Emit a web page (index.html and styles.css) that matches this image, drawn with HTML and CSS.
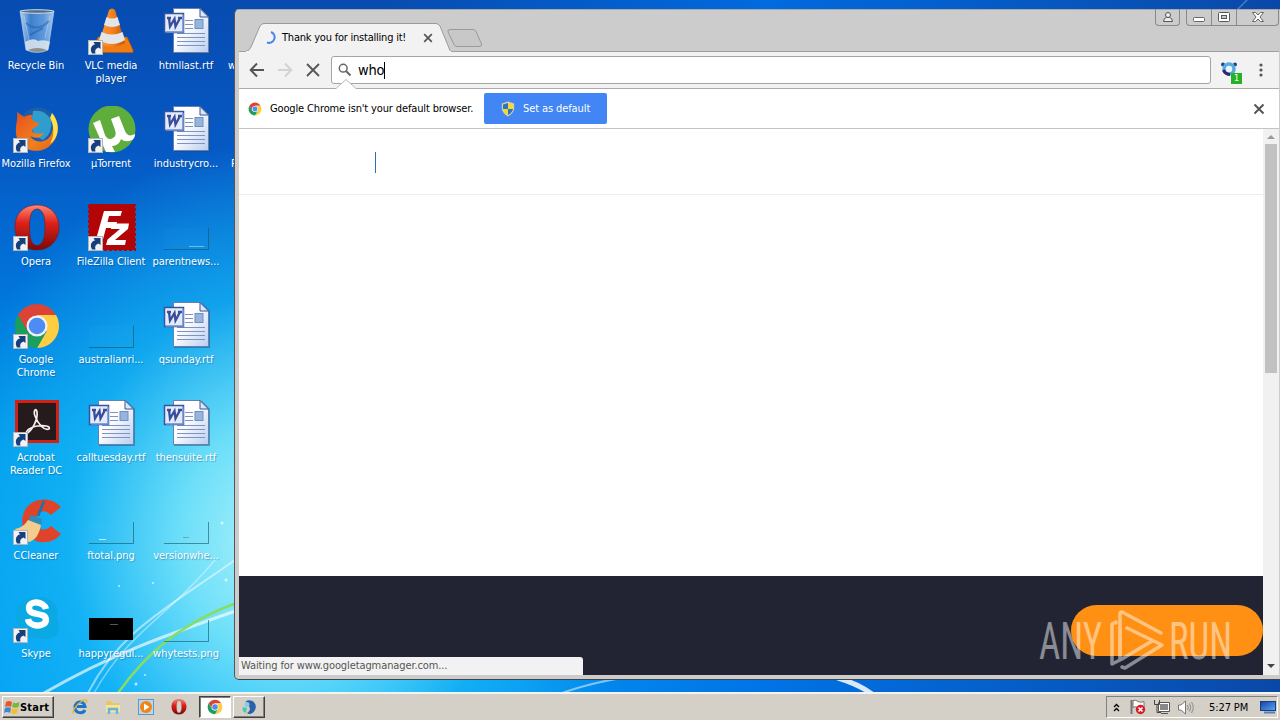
FILE: index.html
```html
<!DOCTYPE html>
<html lang="en">
<head>
    <meta charset="UTF-8">
    <title>Desktop</title>
    <link rel="stylesheet" href="styles.css">
</head>
<body>
    <!-- shared icons -->
    <svg class="defs" width="0" height="0">
        <defs>
            <linearGradient id="gPage" x1="0" y1="0" x2="1" y2="1"><stop offset="0.4" stop-color="#fff"/><stop offset="1" stop-color="#b9cdf2"/></linearGradient>
            <linearGradient id="gGlass" x1="0" y1="0" x2="1" y2="0"><stop offset="0" stop-color="#b9d4f0"/><stop offset="0.3" stop-color="#3e7fce"/><stop offset="0.7" stop-color="#5d98db"/><stop offset="1" stop-color="#a5c8ec"/></linearGradient>
            <linearGradient id="gOpera" x1="0" y1="0" x2="0" y2="1"><stop offset="0" stop-color="#ff8877"/><stop offset="0.4" stop-color="#dd2218"/><stop offset="1" stop-color="#7c0808"/></linearGradient>
            <linearGradient id="gCone" x1="0" y1="0" x2="1" y2="0"><stop offset="0" stop-color="#ff9a30"/><stop offset="0.5" stop-color="#f58220"/><stop offset="1" stop-color="#c55408"/></linearGradient>
            <linearGradient id="gFox" x1="0" y1="0" x2="1" y2="1"><stop offset="0" stop-color="#e8501a"/><stop offset="0.6" stop-color="#f08020"/><stop offset="1" stop-color="#e86010"/></linearGradient>
            <linearGradient id="gScreen" x1="0" y1="0" x2="1" y2="1"><stop offset="0" stop-color="#1840a8"/><stop offset="1" stop-color="#58a8f0"/></linearGradient>
        </defs>
        <symbol id="shortcut" viewBox="0 0 15 15">
            <rect x="0.5" y="0.5" width="14" height="14" fill="#f0f2f5" stroke="#b5b5b5"/>
            <path d="M4 13.500 C1.500 9 3.500 5 7 4.500 L5.500 2 L12.500 2 L12.500 9 L10.500 7.500 C7.500 8.500 6.500 10.500 7.500 13.500Z" fill="#173f7c"/>
        </symbol>
        <symbol id="word" viewBox="0 0 48 48">
            <path d="M11 1 H39 L47 9 V46 H11Z" fill="#345" opacity="0.45"/>
            <path d="M10.500 0.500 H37 L45.500 9 V44.500 H10.500Z" fill="url(#gPage)" stroke="#6480b8"/>
            <path d="M37 0.500 V9 H45.500Z" fill="#dbe7fb" stroke="#3b5792"/>
            <path d="M22 12.500 H30 M22 16.500 H30 M22 20.500 H30 M14 25.500 H42 M14 29.500 H42 M14 33.500 H42 M14 37.500 H42" stroke="#7f93bd"/>
            <rect x="32" y="11.500" width="8" height="9" fill="#95b5df" stroke="#738eb9"/>
            <rect x="1.500" y="5.500" width="19" height="19" fill="#e4ecfb" stroke="#3555a1" stroke-width="1.500"/>
            <path d="M20 7 V24 H3" fill="none" stroke="#7895d3" stroke-width="1.500"/>
            <path d="M4 10 H8 M6 10 L7 18.500 L11.500 11 L12.500 18.500 L17 10 M15 10 H19" fill="none" stroke="#394e9b" stroke-width="2.300"/>
        </symbol>
        <symbol id="thumb" viewBox="0 0 48 48">
            <rect x="1" y="24" width="44" height="21" fill="#8ef" opacity="0.03"/>
            <path d="M1 45.500 H45.500 V24" fill="none" stroke="#17545f" stroke-opacity="0.6" stroke-width="1"/>
        </symbol>
        <symbol id="chrome" viewBox="0 0 48 48">
            <path d="M24 13 H43.050 A22 22 0 0 0 4.950 13 L14.500 29.500Z" fill="#dc4437"/>
            <path d="M33.500 29.500 L24 46 A22 22 0 0 0 43.050 13 H24Z" fill="#ffcd40"/>
            <path d="M4.950 13 L14.500 29.500 L24 35 L33 30 L24 46 A22 22 0 0 1 4.950 13Z" fill="#1a9f5c"/>
            <circle cx="24" cy="24" r="10.500" fill="#f1f1f1"/>
            <circle cx="24" cy="24" r="8.300" fill="#4d8cf5"/>
        </symbol>
        <symbol id="opera" viewBox="0 0 48 48">
            <path fill-rule="evenodd" fill="url(#gOpera)" stroke="#7d1414" stroke-width="0.600" d="M24 1 C38 1 46 11 46 23 S38 46 24 46 S2 36 2 23 S10 1 24 1Z M24 5 C18 5 16.500 13 16.500 23 S18 41.500 24 41.500 S32 33 32 23 S30 5 24 5Z"/>
        </symbol>
    </svg>

    <div class="desktop">
        <svg class="wallpaper" width="1280" height="692" viewBox="0 0 1280 692">
            <g fill="none" stroke-linecap="round">
                <path d="M44 693 C110 655 160 637 250 606" stroke="#fff" stroke-width="3" opacity="0.65"/>
                <path d="M88 693 C120 630 165 610 245 553" stroke="#fff" stroke-width="2" opacity="0.5"/>
                <path d="M94 693 C130 630 165 620 215 560" stroke="#fff" stroke-width="1.500" opacity="0.4"/>
                <path d="M118 693 C145 655 180 622 245 600" stroke="#87dd62" stroke-width="2.500"/>
                <path d="M562 693 Q590 683 622 678" stroke="#fff" stroke-width="2" opacity="0.5"/>
                <path d="M838 678 Q858 684 872 694" stroke="#fff" stroke-width="5" opacity="0.85"/>
                <path d="M1238 9 L1247 0" stroke="#7ab0dd" stroke-width="1.500" opacity="0.5"/>
            </g>
            <g fill="#fff" opacity="0.7"><circle cx="132" cy="560" r="1.500"/><circle cx="222" cy="523" r="1.500"/><circle cx="226" cy="580" r="1.500"/><circle cx="153" cy="583" r="1"/><circle cx="136" cy="684" r="1.500"/><circle cx="119" cy="586" r="1"/><circle cx="145" cy="675" r="1"/></g>
        </svg>

        <div class="icons">
            <div class="item">
                <svg class="pic" viewBox="0 0 48 48">
                    <path d="M7 3 L13 42 Q24 47 35 42 L41 3Z" fill="url(#gGlass)" stroke="#a9c9ea" stroke-width="0.700"/>
                    <ellipse cx="24" cy="3.500" rx="17" ry="1.800" fill="#5b6c7c" stroke="#c9ddf0"/>
                    <path d="M12 34 Q20 29 25 33 Q32 31 37 34 L35 42 Q24 46 13 42Z" fill="#dfe7ee" opacity="0.85"/>
                    <path d="M15 42 Q24 38 34 42 Q24 46 15 42Z" fill="#8d8f8c"/>
                    <path d="M11 8 L16 32 M37 8 L32 30" stroke="#bcdcf8" stroke-opacity="0.5" fill="none"/>
                    <path d="M13 15 Q24 25 36 13 M17 27 L30 20" stroke="#1e5bb0" stroke-opacity="0.5" fill="none" stroke-width="2"/>
                </svg>
                <span>Recycle Bin</span>
            </div>
            <div class="item">
                <svg class="pic" viewBox="0 0 48 48">
                    <path d="M10 29 H39 L45 42 V44.500 H5 V42Z" fill="#ef7d12" stroke="#b5560c" stroke-width="0.700"/>
                    <path d="M21 2 Q24 -1 27 2 L37 35 Q24 43 11 35Z" fill="url(#gCone)"/>
                    <path d="M18.500 9 Q24 12 29.500 9 L32 17 Q24 21 16 17Z M13.500 24 Q24 29 34.500 24 L37 32 Q24 40 11 32Z" fill="#e3e5e8"/>
                </svg>
                <svg class="link"><use href="#shortcut"/></svg>
                <span>VLC media<br>player</span>
            </div>
            <div class="item"><svg class="pic"><use href="#word"/></svg><span>htmllast.rtf</span></div>

            <div class="item">
                <svg class="pic" viewBox="0 0 48 48">
                    <circle cx="25" cy="21" r="19.500" fill="#1c5fa8"/>
                    <path d="M20 5 Q32 3 38 14 Q40 27 30 34 Q20 30 18 20Z" fill="#2f9dce"/>
                    <path d="M39 7 C48 17 47 36 32 43 C18 49 1 40 3 22 C3 16 5 14 4 6 L11 11 C14 9 18 9 20 9 C17 12 19 16 26 17 C26 21 20 21 19 24 C19 28 26 28 31 27 C28 32 23 33 17 30 C22 38 34 37 38 29 C41 22 41 15 39 7Z" fill="url(#gFox)"/>
                    <path d="M39 7 C48 18 46 32 37 38 C42 29 41 19 37 12Z" fill="#ffe14a"/>
                </svg>
                <svg class="link"><use href="#shortcut"/></svg>
                <span>Mozilla Firefox</span>
            </div>
            <div class="item">
                <svg class="pic" viewBox="0 0 48 48">
                    <circle cx="24" cy="23" r="23.500" fill="#5fae3c"/>
                    <path d="M5 17 L12 14 L17 29 Q20 35 25 32 Q29 30 27 24 L23 13 L31 10 L37 25 Q40 32 47 28 Q47 32 44 34 Q37 37 33 33 Q31 40 24 40 L27 46 H18Z" fill="#fff"/>
                </svg>
                <svg class="link"><use href="#shortcut"/></svg>
                <span>µTorrent</span>
            </div>
            <div class="item"><svg class="pic"><use href="#word"/></svg><span>industrycro...</span></div>

            <div class="item">
                <svg class="pic"><use href="#opera"/></svg>
                <svg class="link"><use href="#shortcut"/></svg>
                <span>Opera</span>
            </div>
            <div class="item">
                <svg class="pic" viewBox="0 0 48 48">
                    <rect x="1" y="0" width="46" height="46" fill="#b30505" stroke="#a80a10" stroke-width="2" stroke-dasharray="3 2"/>
                    <path d="M16 7 H34 L32.500 12 H21 L19.500 18 H29 L27.500 24 H18 L14 39 H7Z M24 19.500 H41 L40 25 L27 36 H38 L37 41 H18 L19.500 35.500 L32 25 H23Z" fill="#fff"/>
                </svg>
                <svg class="link"><use href="#shortcut"/></svg>
                <span>FileZilla Client</span>
            </div>
            <div class="item"><svg class="pic"><use href="#thumb"/><path d="M26 42.500H41" stroke="#7be0f5" opacity="0.7"/></svg><span>parentnews...</span></div>

            <div class="item">
                <svg class="pic"><use href="#chrome"/></svg>
                <svg class="link"><use href="#shortcut"/></svg>
                <span>Google<br>Chrome</span>
            </div>
            <div class="item"><svg class="pic"><use href="#thumb"/></svg><span>australianri...</span></div>
            <div class="item"><svg class="pic"><use href="#word"/></svg><span>qsunday.rtf</span></div>

            <div class="item">
                <svg class="pic" viewBox="0 0 48 48">
                    <rect x="3.500" y="1.500" width="41" height="40" fill="#251a1c" stroke="#d31f14" stroke-width="3"/>
                    <path d="M13 34 C20 30 25 19 24 12 C23 7 20 11 22 16 C25 24 31 31 36 29 C38 26 31 25 24 26 C18 27 13 30 13 34Z" fill="none" stroke="#f5eeee" stroke-width="1.700"/>
                </svg>
                <svg class="link"><use href="#shortcut"/></svg>
                <span>Acrobat<br>Reader DC</span>
            </div>
            <div class="item"><svg class="pic"><use href="#word"/></svg><span>calltuesday.rtf</span></div>
            <div class="item"><svg class="pic"><use href="#word"/></svg><span>thensuite.rtf</span></div>

            <div class="item">
                <svg class="pic" viewBox="0 0 48 48">
                    <path d="M48 9 C37 -3 17 0 11 14 C5 30 15 42 27 44 C36 45 43 42 48 36 L38 28 C31 35 23 31 23 22 C23 13 32 10 38 17Z" fill="#df4329"/>
                    <path d="M31 3 L25 18" stroke="#1476ae" stroke-width="2.500"/>
                    <path d="M18 17 L29 21 L28 28 L15 23Z" fill="#2d8dbd"/>
                    <path d="M15 22 L28 27 C26 37 22 43 15 44 Q8 43 2 31 Q10 30 15 22Z" fill="#f3cd8d"/>
                </svg>
                <svg class="link"><use href="#shortcut"/></svg>
                <span>CCleaner</span>
            </div>
            <div class="item"><svg class="pic"><use href="#thumb"/><path d="M11 41.500H18" stroke="#b5f5ff"/></svg><span>ftotal.png</span></div>
            <div class="item"><svg class="pic"><use href="#thumb"/><path d="M20 39.500H26" stroke="#6ba8b5"/></svg><span>versionwhe...</span></div>

            <div class="item">
                <svg class="pic" viewBox="0 0 48 48">
                    <path d="M6 9 Q12 0 22 2 Q32 -1 40 6 Q46 13 44 22 Q49 34 41 41 Q32 45 24 42 Q10 42 5 30 Q1 18 6 9Z" fill="#0aa9e4"/>
                    <path d="M33 13 C31 5 16 4 16 12 C16 21 33 15 33 24 C32 32 16 31 15 23" fill="none" stroke="#fff" stroke-width="6.300"/>
                </svg>
                <svg class="link"><use href="#shortcut"/></svg>
                <span>Skype</span>
            </div>
            <div class="item"><svg class="pic"><path d="M1 22H45V44H1Z"/><path d="M22 28.500H30" stroke="#555"/></svg><span>happyregul...</span></div>
            <div class="item"><svg class="pic"><use href="#thumb"/><path d="M20 36.500H27" stroke="#8bc5cc"/></svg><span>whytests.png</span></div>
        </div>

        <div class="peek peek-top">w</div>
        <div class="peek peek-low">R</div>

        <div class="window">
            <div class="titlebar">
                <div class="tab">
                    <svg class="tab-shape" width="206" height="29" viewBox="0 0 206 29"><path d="M0 28.500 Q4 28.500 6 24 L15 3 Q16.500 0.500 19 0.500 H191 Q193 0.500 195 3 L204 25 Q205 28.500 206 28.500" fill="#f2f2f2" stroke="#9a9a9a"/><path d="M1 29H206" stroke="#f2f2f2" stroke-width="2"/></svg>
                    <svg class="spinner" width="13" height="13" viewBox="0 0 13 13"><path d="M7 1 A5.400 5.400 0 0 1 3 11.500" fill="none" stroke="#4a84f0" stroke-width="2"/></svg>
                    <span class="tab-title">Thank you for installing it!</span>
                    <svg class="tab-close" width="10" height="10" viewBox="0 0 10 10"><path d="M1.200 1.200L8.800 8.800M8.800 1.200L1.200 8.800" stroke="#555" stroke-width="1.700"/></svg>
                </div>
                <svg class="new-tab" width="36" height="18" viewBox="0 0 36 18"><path d="M3 0.500 H26 Q28 0.500 29 2.500 L34.500 15 Q35 17.500 33 17.500 H10 Q8 17.500 7 15.500 L1 3 Q0.500 0.500 3 0.500Z" fill="#c8c8c8" stroke="#999"/></svg>
                <div class="controls">
                    <div class="ctl user"><svg width="12" height="12" viewBox="0 0 12 12"><circle cx="6" cy="4" r="2.500" fill="#eee" stroke="#555"/><path d="M1.500 10.500 Q1.500 7 4.500 6.500 H7.500 Q10.500 7 10.500 10.500Z" fill="#eee" stroke="#555"/></svg></div>
                    <div class="ctl min"><svg width="12" height="12"><rect x="0.500" y="6.500" width="11" height="4" rx="1" fill="#fff" stroke="#666"/></svg></div>
                    <div class="ctl max"><svg width="12" height="10"><rect x="0.500" y="0.500" width="11" height="9" rx="1" fill="#fff" stroke="#555"/><rect x="3.500" y="3.500" width="5" height="3" fill="#ccc" stroke="#555"/></svg></div>
                    <div class="ctl close"><svg width="12" height="10" viewBox="0 0 12 10"><path d="M0.500 0.500H3.500L6 3L8.500 0.500H11.500L8 5L11.500 9.500H8.500L6 7L3.500 9.500H0.500L4 5Z" fill="#fff" stroke="#666"/></svg></div>
                </div>
            </div>
            <div class="toolbar">
                <svg class="nav" width="16" height="16" viewBox="0 0 16 16"><path d="M15 8H2M8 1.500L1.700 8L8 14.500" fill="none" stroke="#555" stroke-width="2"/></svg>
                <svg class="nav" width="16" height="16" viewBox="0 0 16 16"><path d="M1 8H14M8 1.500L14.300 8L8 14.500" fill="none" stroke="#d3d3d3" stroke-width="2"/></svg>
                <svg class="nav" width="16" height="16" viewBox="0 0 16 16"><path d="M2 2L14 14M14 2L2 14" stroke="#555" stroke-width="1.800"/></svg>
                <div class="omnibox">
                    <svg width="14" height="14" viewBox="0 0 14 14"><circle cx="5.200" cy="5.200" r="3.900" fill="none" stroke="#666" stroke-width="1.500"/><path d="M8 8L12.500 12.500" stroke="#666" stroke-width="2"/></svg>
                    <span class="query">who</span>
                </div>
                <div class="extension">
                    <svg width="18" height="18" viewBox="0 0 18 18"><circle cx="3" cy="3.500" r="2" fill="#24477f"/><circle cx="15" cy="3.500" r="2" fill="#24477f"/><circle cx="9" cy="8" r="5" fill="#e8f5fd" stroke="#55a8e0" stroke-width="3.500"/><path d="M3.500 9 Q5 13 10 13.500" fill="none" stroke="#34236b" stroke-width="3"/></svg>
                    <span class="badge">1</span>
                </div>
                <svg class="menu" width="4" height="14"><g fill="#555"><circle cx="2" cy="2" r="1.600"/><circle cx="2" cy="7" r="1.600"/><circle cx="2" cy="12" r="1.600"/></g></svg>
            </div>
            <div class="infobar">
                <svg class="notch" width="20" height="10" viewBox="0 0 20 10"><path d="M0 9.500L10 0.500L20 9.500V10H0Z" fill="#fff"/><path d="M0 9.500L10 0.500L20 9.500" fill="none" stroke="#bbb"/></svg>
                <svg class="logo" width="14" height="14"><use href="#chrome"/></svg>
                <span class="message">Google Chrome isn't your default browser.</span>
                <div class="set-default">
                    <svg width="14" height="16" viewBox="0 0 14 16"><path d="M7 0.500L13.200 2.500V8Q12 13 7 15.500Q2 13 0.800 8V2.500Z" fill="#ddd0a0"/><path d="M7 2V8H2V3.500Z M7 8H12Q11 12 7 14Z" fill="#2479c4"/><path d="M7 2L12 3.500V8H7Z M7 14Q3 12 2 8H7Z" fill="#fcd535"/></svg>
                    <span>Set as default</span>
                </div>
                <svg class="info-close" width="12" height="12" viewBox="0 0 12 12"><path d="M1.500 1.500L10.500 10.500M10.500 1.500L1.500 10.500" stroke="#555" stroke-width="2"/></svg>
            </div>
            <div class="viewport">
                <div class="page">
                    <div class="page-header"><i class="mark"></i></div>
                    <div class="page-body"></div>
                    <div class="page-footer"><div class="cta"></div></div>
                    <div class="status">Waiting for www.googletagmanager.com...</div>
                </div>
                <div class="scrollbar">
                    <svg width="8" height="4"><path d="M0 4L4 0L8 4Z" fill="#999"/></svg>
                    <div class="scroll-thumb"></div>
                    <svg class="down" width="8" height="4"><path d="M0 0L4 4L8 0Z" fill="#444"/></svg>
                </div>
            </div>
        </div>
    </div>

    <div class="taskbar">
        <div class="start">
            <svg width="16" height="15" viewBox="0 0 16 15"><path d="M2 2Q5 0 8 2L7 7Q4 5.500 1 7Z" fill="#e8562a"/><path d="M9 2.500Q12 4 15.500 2L14.500 7Q11 8.500 8 7Z" fill="#79b83b"/><path d="M1 8Q4 6.500 7 8L6 13Q3 11 0 13Z" fill="#3c87d2"/><path d="M8 8.500Q11 10 14 8L13 13Q10 15 7 13Z" fill="#f6be27"/></svg>
            <span>Start</span>
        </div>
        <div class="launch">
            <svg width="16" height="16" viewBox="0 0 16 16"><path d="M13 11 C11 15 3 15 3 8 C3 2 12 1 13 7.500 H5" fill="none" stroke="#1976c6" stroke-width="3"/><path d="M2 14C-1 15 3 6 10 2C14 0 16 1 14 4" fill="none" stroke="#e8b52e" stroke-width="1.300"/></svg>
            <svg width="16" height="16" viewBox="0 0 16 16"><path d="M1 2H6L7 4H14V13H1Z" fill="#e9c565"/><path d="M1 6H15V13H1Z" fill="#f9e596"/><path d="M4 15V10H12V15" fill="none" stroke="#66b4df" stroke-width="2.500"/></svg>
            <svg width="16" height="16" viewBox="0 0 16 16"><rect x="0.500" y="0.500" width="15" height="15" fill="#b9d8ee" stroke="#5b98c7"/><circle cx="8" cy="8" r="6" fill="#f38313"/><path d="M6 4.500L11.500 8L6 11.500Z" fill="#fff"/></svg>
            <svg width="16" height="16"><use href="#opera"/></svg>
        </div>
        <div class="task active"><svg width="16" height="16"><use href="#chrome"/></svg></div>
        <div class="task"><svg width="16" height="16" viewBox="0 0 16 16"><path d="M5 2C11 -1 17 5 14 11C12 15 8 16 6 14C10 12 10 7 5 5Z" fill="#2861ac"/><circle cx="6" cy="5.500" r="2.500" fill="#8bc8ee"/><path d="M2 8Q0 12 5 14L6 9Z" fill="#42cda2"/></svg></div>
        <div class="tray">
            <svg width="7" height="9" viewBox="0 0 7 9"><path d="M1 4L3.500 1.500L6 4M1 8L3.500 5.500L6 8" fill="none" stroke="#000" stroke-width="1.300"/></svg>
            <svg class="flag" width="17" height="16" viewBox="0 0 17 16"><path d="M2.500 1V15" stroke="#777" stroke-width="2"/><path d="M4 1.500Q7 0.500 9 2.500Q12 4 15 2.500V9Q11 10 9 8.500Q6 7 4 8.500Z" fill="#fff" stroke="#777"/><circle cx="11.500" cy="10.500" r="4.700" fill="#d51f28"/><path d="M9.500 8.500L13.500 12.500M13.500 8.500L9.500 12.500" stroke="#fff" stroke-width="1.600"/></svg>
            <svg class="net" width="16" height="16" viewBox="0 0 16 16"><path d="M4.500 3.500H15.500V12.500H4.500Z" fill="#fff" stroke="#555"/><rect x="6" y="5" width="8" height="6" fill="#888"/><path d="M7 14.500H14" stroke="#555"/><path d="M0.500 1V5.500H5.500V1M3 5.500V13.500H7" fill="none" stroke="#444"/></svg>
            <svg class="vol" width="16" height="15" viewBox="0 0 16 15"><path d="M0.500 5H3L7.500 1V14L3 10H0.500Z" fill="#fff" stroke="#777"/><path d="M9.500 5Q11 7.500 9.500 10M11.500 3.500Q14 7.500 11.500 11.500M13.500 2Q17 7.500 13.500 13" fill="none" stroke="#888"/></svg>
            <span class="clock">5:27 PM</span>
            <svg class="show" width="16" height="14" viewBox="0 0 16 14"><rect x="0.500" y="1.500" width="15" height="9" fill="url(#gScreen)" stroke="#173d82"/><path d="M4 12.500H15" stroke="#5b7fb0" stroke-width="2"/></svg>
        </div>
    </div>

    <svg class="watermark" width="204" height="64" viewBox="0 0 204 64">
        <text x="1" y="51" textLength="63" lengthAdjust="spacingAndGlyphs">ANY</text>
        <text x="131" y="51" textLength="63" lengthAdjust="spacingAndGlyphs">RUN</text>
        <g fill="none" stroke="#fff" stroke-width="3.500" stroke-linejoin="round" stroke-linecap="round">
            <path d="M78 15V14L74 16V56L84 51L114 33"/>
            <path d="M82 50V5Q83 3 86 5L123 25"/>
            <path d="M89 20L124 37L87 60L84 59"/>
            <path d="M82 20V50"/>
        </g>
    </svg>
</body>
</html>
```
FILE: styles.css
```css
* {
    box-sizing: border-box;
}
body {
    margin: 0;
    width: 1280px;
    height: 720px;
    overflow: hidden;
    display: flex;
    flex-direction: column;
    font-family: "DejaVu Sans Condensed", "DejaVu Sans", Tahoma, sans-serif;
    font-stretch: condensed;
    font-size: 11px;
    position: relative;
}
svg {
    display: block;
    flex: none;
}
.defs {
    position: absolute;
}
.desktop {
    height: 692px;
    flex: none;
    position: relative;
    overflow: hidden;
    background:
        radial-gradient(ellipse 350px 400px at 285px 540px, #b4f5fb 0%, rgba(120, 230, 250, 0.9) 30%, rgba(28, 190, 247, 0.6) 62%, rgba(0, 150, 240, 0) 100%),
        linear-gradient(90deg, rgba(10, 70, 170, 0) 30%, rgba(0, 110, 228, 0.9) 60%, #0a48a8 100%),
        linear-gradient(180deg, #074bb0 0, #0659c4 150px, #0077dc 300px, #009aec 450px, #04a0f5 692px);
}
.wallpaper {
    position: absolute;
    left: 0;
    top: 0;
}

/* desktop icons */
.icons {
    display: grid;
    grid-template-columns: repeat(3, 75px);
    grid-auto-rows: 98px;
    margin-left: -1px;
    padding-top: 8px;
    width: 225px;
    position: relative;
}
.item {
    display: flex;
    flex-direction: column;
    align-items: center;
    position: relative;
    color: #fff;
    text-align: center;
}
.item .pic {
    width: 48px;
    height: 48px;
}
.item .link {
    position: absolute;
    left: 14px;
    top: 32px;
    width: 15px;
    height: 15px;
}
.item span {
    margin: 3px 0 0 -1px;
    line-height: 13px;
    white-space: nowrap;
    letter-spacing: -0.05px;
    text-shadow: 1px 1px 1px rgba(0, 40, 90, 0.35);
}
.peek {
    position: absolute;
    left: 228px;
    color: #fff;
}
.peek-top {
    top: 59px;
}
.peek-low {
    top: 157px;
    left: 231px;
}

/* browser window */
.window {
    position: absolute;
    left: 234px;
    top: 9px;
    width: 1046px;
    height: 671px;
    display: flex;
    flex-direction: column;
    padding: 1px 1px 4px 4px;
    background: #ccc;
    border-left: 1px solid #555;
    border-bottom: 1px solid #444;
    border-top: 1px solid #aaa;
    border-radius: 5px 0 0 5px;
}
.titlebar {
    height: 41px;
    display: flex;
    align-items: flex-end;
    border-bottom: 1px solid #a0a0a0;
    flex: none;
    position: relative;
}
.tab {
    width: 206px;
    height: 29px;
    margin: 0 0 -1px 6px;
    display: flex;
    align-items: center;
    position: relative;
}
.tab-shape {
    position: absolute;
    left: 0;
    top: 0;
}
.spinner {
    margin-left: 19px;
    position: relative;
}
.tab-title {
    position: relative;
    margin-left: 5px;
    width: 141px;
    white-space: nowrap;
    letter-spacing: -0.22px;
}
.tab-close {
    position: relative;
}
.new-tab {
    margin: 0 0 4px -4px;
}
.controls {
    display: flex;
    margin-left: auto;
    align-self: flex-start;
    margin-top: -2px;
}
.ctl {
    height: 17px;
    display: flex;
    align-items: center;
    justify-content: center;
    border: 1px solid #8a8a8a;
    border-top: none;
    border-left: none;
}
.user {
    width: 25px;
    margin-right: 6px;
    border-left: 1px solid #8a8a8a;
    border-radius: 0 0 4px 4px;
}
.min {
    width: 26px;
    border-left: 1px solid #8a8a8a;
    border-radius: 0 0 0 4px;
}
.max {
    width: 25px;
}
.close {
    width: 42px;
    border-radius: 0 0 4px 0;
}
.toolbar {
    height: 37px;
    flex: none;
    display: flex;
    align-items: center;
    background: #f2f2f2;
    border-bottom: 1px solid #ababab;
    padding-left: 10px;
}
.nav {
    margin-right: 12px;
}
.omnibox {
    width: 880px;
    height: 28px;
    margin-left: -2px;
    display: flex;
    align-items: center;
    padding-left: 6px;
    background: #fff;
    border: 1px solid #a5a5a5;
    border-radius: 3px;
}
.query {
    margin-left: 6px;
    font-size: 14.5px;
    line-height: 17px;
    border-right: 1px solid #000;
    letter-spacing: -0.2px;
}
.extension {
    position: relative;
    margin-left: 9px;
}
.badge {
    position: absolute;
    left: 11px;
    top: 12px;
    width: 11px;
    height: 11px;
    background: #25b325;
    color: #fff;
    font-size: 9px;
    line-height: 11px;
    text-align: center;
}
.menu {
    margin-left: 21px;
}
.infobar {
    height: 40px;
    flex: none;
    display: flex;
    align-items: center;
    position: relative;
    background: #fff;
    border-bottom: 1px solid #c3c3c3;
    padding: 0 14px 0 9px;
}
.notch {
    position: absolute;
    left: 97px;
    top: -10px;
}
.message {
    margin-left: 8px;
    width: 214px;
    white-space: nowrap;
    letter-spacing: -0.14px;
}
.set-default {
    width: 123px;
    height: 31px;
    display: flex;
    align-items: center;
    padding-left: 17px;
    background: #4285f4;
    border-radius: 2px;
    color: #fff;
    white-space: nowrap;
}
.set-default span {
    margin-left: 8px;
    letter-spacing: -0.1px;
}
.info-close {
    margin-left: auto;
}
.viewport {
    flex: 1;
    display: flex;
    min-height: 0;
}
.page {
    flex: 1;
    display: flex;
    flex-direction: column;
    background: #fff;
    position: relative;
}
.page-header {
    height: 66px;
    border-bottom: 1px solid #ececec;
    padding: 23px 0 0 136px;
}
.mark {
    display: block;
    width: 1px;
    height: 21px;
    background: #2573b8;
}
.page-body {
    flex: 1;
}
.page-footer {
    height: 99px;
    background: #222433;
    padding-top: 29px;
}
.cta {
    width: 192px;
    height: 51px;
    margin-left: auto;
    border-radius: 26px;
    background: #ff9013;
}
.status {
    position: absolute;
    left: 0;
    bottom: 0;
    width: 344px;
    height: 18px;
    line-height: 18px;
    padding-left: 2px;
    background: #f2f2f2;
    color: #555;
    border-radius: 0 3px 0 0;
    letter-spacing: -0.1px;
}
.scrollbar {
    width: 16px;
    background: #f1f1f1;
    display: flex;
    flex-direction: column;
    align-items: center;
    padding: 6px 0 7px;
}
.scroll-thumb {
    width: 12px;
    height: 229px;
    margin-top: 5px;
    background: #c1c1c1;
}
.down {
    margin-top: auto;
}

/* taskbar */
.taskbar {
    height: 28px;
    flex: none;
    display: flex;
    align-items: center;
    background: #d4d0c8;
    border-top: 2px solid #f4f3f0;
    padding: 0 2px;
}
.start {
    width: 52px;
    height: 22px;
    display: flex;
    align-items: center;
    padding-left: 1px;
    font-weight: bold;
    border: 1px solid;
    border-color: #fff #404040 #404040 #fff;
    box-shadow: inset -1px -1px #808080;
}
.start span {
    letter-spacing: 0.2px;
}
.launch {
    display: flex;
    gap: 17px;
    width: 127px;
    margin: 0 0 0 18px;
}
.task {
    width: 32px;
    height: 22px;
    margin-right: 2px;
    display: flex;
    align-items: center;
    justify-content: center;
    border: 1px solid;
    border-color: #fff #404040 #404040 #fff;
    box-shadow: inset -1px -1px #808080;
}
.task.active {
    background: #fff;
    border-color: #404040 #fff #fff #404040;
    box-shadow: inset 1px 1px #808080;
}
.tray {
    margin-left: auto;
    width: 172px;
    height: 22px;
    display: flex;
    align-items: center;
    padding-left: 6px;
    border: 1px solid;
    border-color: #808080 #fff #fff #808080;
}
.flag {
    margin-left: 9px;
}
.net {
    margin-left: 8px;
}
.vol {
    margin-left: 8px;
}
.clock {
    width: 51px;
    margin-left: 15px;
    white-space: nowrap;
    letter-spacing: -0.1px;
}

.watermark {
    position: absolute;
    left: 1038px;
    top: 608px;
    opacity: 0.47;
}
.watermark text {
    font-family: Roboto, sans-serif;
    font-weight: 400;
    font-size: 52px;
    fill: #fff;
}
```
